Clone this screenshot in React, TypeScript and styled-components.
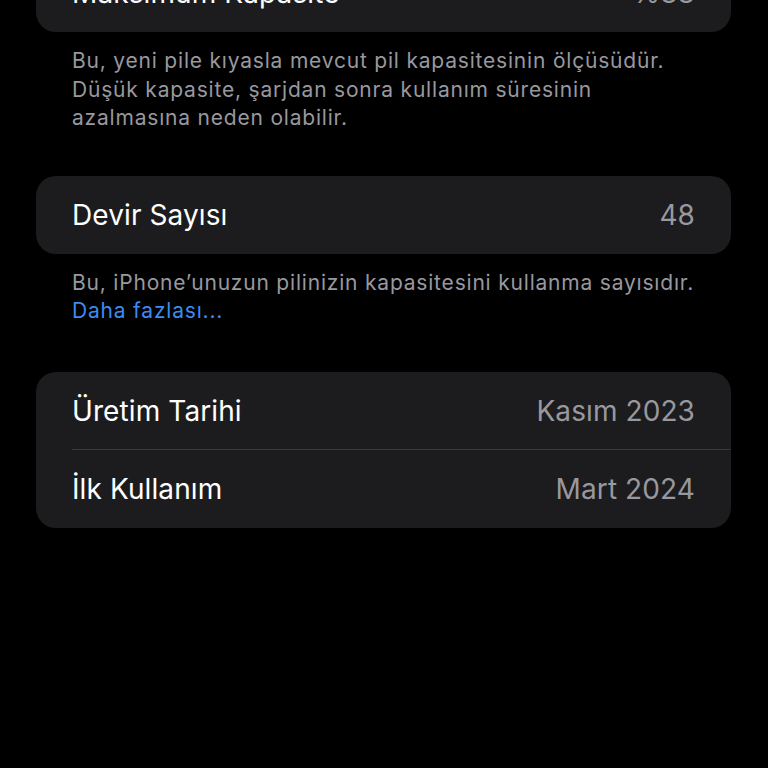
import React from "react";
import styled, { createGlobalStyle } from "styled-components";

const GlobalStyle = createGlobalStyle`
  html, body {
    margin: 0;
    padding: 0;
    background: #000;
    height: 768px;
    overflow: hidden;
  }
  body {
    font-family: Inter, "Noto Sans", "Liberation Sans", sans-serif;
    -webkit-font-smoothing: antialiased;
  }
`;

const Page = styled.div`
  display: flex;
  flex-direction: column;
  padding: 0 37px 0 36px;
  margin-top: -46px;
`;

const Group = styled.div`
  display: flex;
  flex-direction: column;
  background: #1c1c1e;
  border-radius: 20px;
  overflow: hidden;
`;

const Row = styled.div<{ $divider?: boolean }>`
  display: flex;
  align-items: center;
  justify-content: space-between;
  height: 78px;
  padding: 0 36px;
  position: relative;
  ${(p) =>
    p.$divider &&
    `
    &::after {
      content: "";
      position: absolute;
      left: 36px;
      right: 0;
      bottom: 0;
      height: 1px;
      background: #38383a;
    }
  `}
`;

const Label = styled.span`
  color: #ffffff;
  font-size: 28px;
  letter-spacing: 0.1px;
`;

const Value = styled.span`
  color: #98989e;
  font-size: 28px;
  letter-spacing: 0.1px;
`;

const Footer = styled.p`
  margin: 0;
  padding: 15px 36px 0 36px;
  color: #98989e;
  font-size: 21px;
  line-height: 28.5px;
  letter-spacing: 0.8px;
`;

const Link = styled.span`
  color: #3a8cf2;
`;

const Section = styled.section<{ $gap?: number }>`
  display: flex;
  flex-direction: column;
  margin-top: ${(p) => p.$gap ?? 0}px;
`;

type Item = { label: string; value: string };

const List = ({ items }: { items: Item[] }) => (
  <Group>
    {items.map((it, i) => (
      <Row key={it.label} $divider={i < items.length - 1}>
        <Label>{it.label}</Label>
        <Value>{it.value}</Value>
      </Row>
    ))}
  </Group>
);

export default function App() {
  return (
    <>
      <GlobalStyle />
      <Page>
        <Section>
          <List items={[{ label: "Maksimum Kapasite", value: "%88" }]} />
          <Footer>
            Bu, yeni pile kıyasla mevcut pil kapasitesinin ölçüsüdür.
            <br />
            Düşük kapasite, şarjdan sonra kullanım süresinin
            <br />
            azalmasına neden olabilir.
          </Footer>
        </Section>
        <Section $gap={43}>
          <List items={[{ label: "Devir Sayısı", value: "48" }]} />
          <Footer>
            Bu, iPhone’unuzun pilinizin kapasitesini kullanma sayısıdır.
            <br />
            <Link>Daha fazlası...</Link>
          </Footer>
        </Section>
        <Section $gap={46}>
          <List
            items={[
              { label: "Üretim Tarihi", value: "Kasım 2023" },
              { label: "İlk Kullanım", value: "Mart 2024" },
            ]}
          />
        </Section>
      </Page>
    </>
  );
}
